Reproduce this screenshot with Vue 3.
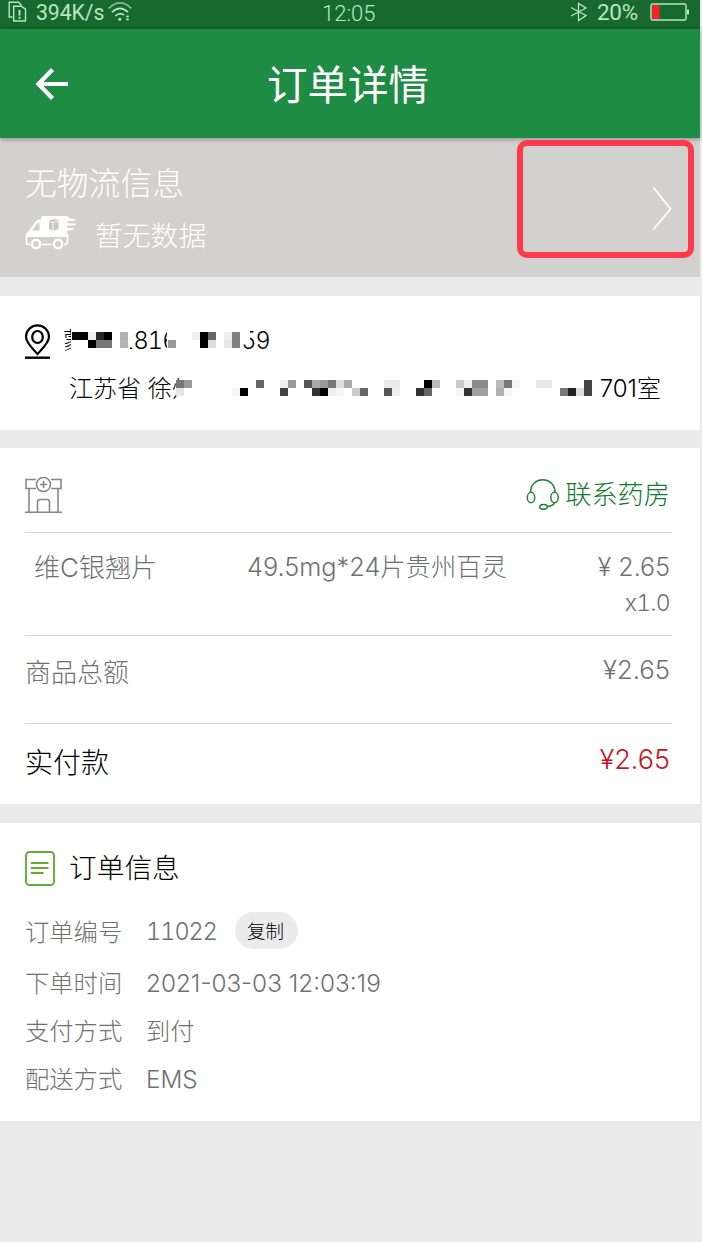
<script setup>
const cells = (rows, y0) =>
  rows.flatMap(([x, top, bottom]) => [
    { x, y: y0, fill: top },
    { x, y: y0 + 8, fill: bottom },
  ]).filter((c) => c.fill)

const phoneMosaic = cells([
  [72, '#0c0c0c', '#fff'], [80, '#000', '#fff'], [88, '#eee', '#000'], [96, '#262626', '#777'],
  [104, '#000', '#777'], [112, '#fff', '#fff'], [120, '#b2b2b2', '#b5b5b5'],
  [168, '#fff', '#999'], [176, '#fff', '#fdfdfd'], [192, '#eee', '#fff'], [200, '#000', '#000'],
  [208, '#666', '#ddd'], [224, '#eee', '#e8e8e8'], [232, '#808080', '#808080'],
], 36)

const addressMosaic = cells([
  [176, '#777', '#e5e5e5'], [184, '#999', '#fff'], [232, '', '#f6f6f6'], [240, '', '#000'],
  [256, '#666', ''], [280, '#eee', '#444'], [288, '#999', ''], [304, '#555', ''],
  [312, '#aaa', '#333'], [320, '#999', '#000'], [328, '#777', '#eee'], [336, '#ddd', '#f6f6f6'],
  [344, '#aaa', ''], [352, '', '#ccc'], [360, '', '#666'], [384, '#eaeaea', '#555'],
  [392, '#eaeaea', '#eee'], [416, '', '#333'], [424, '#000', '#666'], [432, '#bbb', ''],
  [456, '#ccc', '#f6f6f6'], [464, '#eee', '#333'], [472, '#8c8c8c', '#a0a0a0'],
  [480, '#8c8c8c', '#a0a0a0'], [496, '#bbb', '#b0b0b0'], [504, '#777', '#f6f6f6'],
  [512, '#f6f6f6', ''], [536, '#e8e8e8', ''], [544, '#e8e8e8', ''], [560, '', '#777'],
  [568, '', '#222'], [576, '', '#ddd'], [584, '#444', '#444'],
], 84)

const mosaic = [...phoneMosaic, ...addressMosaic]

const info = [
  { label: '订单编号', value: '11022', copy: true },
  { label: '下单时间', value: '2021-03-03 12:03:19' },
  { label: '支付方式', value: '到付' },
  { label: '配送方式', value: 'EMS' },
]
</script>

<template>
  <div class="page">
    <div class="status">
      <svg class="sim" width="20" height="22" viewBox="0 0 20 22" fill="none" stroke="#b9e6bd" stroke-width="1.4">
        <path d="M4.500 17H1.200V2.200H10.500l3 3M5.700 6.200h7.500l4.300 3v11.800H5.700z" />
        <path d="M11.500 10v5.500M11.500 16.800v2" stroke-width="2" />
      </svg>
      <span class="speed">394K/s</span>
      <svg class="wifi" width="24" height="20" viewBox="0 0 24 20" fill="none" stroke="#b9e6bd" stroke-width="1.7">
        <path d="M.8 6.3Q12-4.500 23.2 6.3" opacity=".65" /><path d="M4 10.2Q12 2.500 20 10.2M7.2 14Q12 9.500 16 13.2" />
        <circle cx="11.8" cy="17.2" r="1.5" fill="#b9e6bd" stroke="none" />
        <path d="M18.2 14.3h3.600M18.2 17.300h3.600" stroke-dasharray="2.6 1" />
      </svg>
      <span class="time">12:05</span>
      <svg class="bt" width="18" height="20" viewBox="0 0 18 20" fill="none" stroke="#b9e6bd" stroke-width="1.300">
        <path d="M1 5.500l15 8-7.500 5V1.500l7.500 4.500-15 8" />
      </svg>
      <span class="percent">20%</span>
      <svg class="battery" width="40" height="19" viewBox="0 0 40 19">
        <rect x="1" y="1" width="35" height="16" rx="1.500" fill="none" stroke="#b9e6bd" stroke-width="1.400" />
        <path d="M2 2h7.500v14H2z" fill="#f5222a" /><path d="M37 6.500h2v5h-2z" fill="#b9e6bd" />
      </svg>
    </div>

    <header class="header">
      <svg class="back" width="34" height="32" viewBox="0 0 34 32" fill="none" stroke="#fff" stroke-width="4.200">
        <path d="M17.500 1.500L3.500 16l14 14.500M4 16h29" />
      </svg>
      <h1>订单详情</h1>
    </header>

    <section class="logistics">
      <div class="log-title">无物流信息</div>
      <div class="log-row">
        <svg width="52" height="36" viewBox="0 0 52 36">
          <path d="M16 3q0-2 2-2h23q3 0 3.500 2.500l6 .8v1.200L42 6.500V8l9 .7v1.100L42 11v1.800l7 .7v1.200l-6.500 1L42 22H16z" fill="#fff" />
          <path d="M15 5.500q-2-.5-4 2L5.500 15l-4 4.500V28q0 1.500 1.500 1.500h2M17 29.500h9.500M38.500 29.500H40q2.500 0 2.500-3V19" fill="none" stroke="#fff" stroke-width="1.700" />
          <path d="M17 5h-2q-2 0-4 3L5.500 15.500 1 20v2h16zM14.500 7.500v8H7l4.500-6.500q1-1.500 3-1.500z" fill="#fff" fill-rule="evenodd" />
          <circle cx="11" cy="29" r="4.200" fill="none" stroke="#fff" stroke-width="2.500" />
          <circle cx="33" cy="29" r="4.200" fill="none" stroke="#fff" stroke-width="2.500" />
          <path d="M24 5.500l4.500-1.500 5 1v9l-5 2-4.500-2z" fill="#c9c8c6" />
          <path d="M24 6.500l4 1 5-1.500M28 7.500V16" fill="none" stroke="#fff" stroke-width=".9" />
        </svg>
        <span>暂无数据</span>
      </div>
      <svg class="chevron" width="20" height="46" viewBox="0 0 20 46" fill="none" stroke="#fff" stroke-width="1.700">
        <path d="M1.500 1.500L18.500 23 1.500 43.500" />
      </svg>
      <div class="highlight"></div>
    </section>

    <section class="address">
      <svg class="pin" width="27" height="36" viewBox="0 0 27 36" fill="none" stroke="#000" stroke-width="2.200">
        <path d="M13.500 30C9 25 2 19 2 12.800A11.500 11.500 0 0 1 25 12.800C25 19 18 25 13.500 30z" />
        <ellipse cx="13.500" cy="13" rx="5.300" ry="6" /><path d="M1 33.700h25" stroke-width="2.400" />
      </svg>
      <div class="contact">
        <span class="name">蒙</span><span class="digits">1816</span><span class="tail">59</span>
      </div>
      <div class="street"><span class="region">江苏省 徐州</span><span class="room">701室</span></div>
      <svg class="mosaic" width="700" height="134" viewBox="0 0 700 134" shape-rendering="crispEdges">
        <path d="M71 28h41v32H71zM112 28h18v32h-18zM167 28h69v26h-69zM236 28h14v18h-14zM180 76h56v32h-56zM592 76h9v32h-9z" fill="#fff" />
        <rect v-for="(c, i) in mosaic" :key="i" :x="c.x" :y="c.y" width="8" height="8" :fill="c.fill" />
      </svg>
    </section>

    <section class="goods">
      <div class="shop">
        <svg width="37" height="38" viewBox="0 0 37 38" fill="none" stroke="#888" stroke-width="1.600">
          <path d="M11 3.500H1v9h10M26 3.500h10v9H26M4 12.500V36M33 12.500V36M0 36.200h37M12.500 36V26q0-2.500 2.500-2.500h7q2.500 0 2.500 2.500v10" />
          <circle cx="18.500" cy="8.500" r="7" /><path d="M18.500 5v7M15 8.500h7" />
        </svg>
        <span class="call">
          <svg width="34" height="32" viewBox="0 0 34 32" fill="none" stroke="#208335" stroke-width="1.500">
            <path d="M4.500 13.500C4.500-3.500 29-3.500 29 13.500" />
            <ellipse cx="5" cy="18.500" rx="3.700" ry="5.200" /><ellipse cx="28.500" cy="18.500" rx="3.700" ry="5.200" />
            <path d="M28.500 24q-2 3-7 3.500" /><ellipse cx="17.500" cy="27.800" rx="3.800" ry="2.400" />
          </svg>
          <span>联系药房</span>
        </span>
      </div>
      <div class="item">
        <span class="item-name">维C银翘片</span>
        <span class="spec">49.5mg*24片贵州百灵</span>
        <span class="cost"><span>¥ 2.65</span><span class="qty">x1.0</span></span>
      </div>
      <div class="total"><span class="total-label">商品总额</span><span class="sum">¥2.65</span></div>
      <div class="paid"><span>实付款</span><span class="paid-sum">¥2.65</span></div>
    </section>

    <section class="order">
      <div class="order-head">
        <svg width="30" height="36" viewBox="0 0 30 36" fill="none" stroke="#5fae34" stroke-width="1.900">
          <rect x="1" y="2" width="28" height="33" rx="3.500" /><path d="M6 13h17.500M6 18h17.500M6 23h12.500" />
        </svg>
        <span>订单信息</span>
      </div>
      <div v-for="row in info" :key="row.label" class="row">
        <span class="label">{{ row.label }}</span>
        <span class="value">{{ row.value }}</span>
        <button v-if="row.copy" class="copy">复制</button>
      </div>
    </section>
  </div>
</template>

<style>
body { background: #ebebeb; }
</style>

<style scoped>
.page { width: 702px; height: 1242px; overflow: hidden; background: #ebebeb; font-family: Inter, "Noto Sans CJK SC", sans-serif; font-weight: 300; color: #000; }
.page * { box-sizing: border-box; }
.page svg { display: block; flex: none; }
.page span { white-space: nowrap; }
.status, .header, section { width: 700px; }
.status { height: 29px; background: #17692f; display: flex; color: #b9e6bd; font-family: Roboto, sans-serif; font-size: 22px; font-weight: 300; line-height: 27px; }
.sim { margin: 0 0 0 8px; }
.speed { width: 69px; margin-left: 8px; font-size: 21.300px; line-height: 26px; font-weight: 400; letter-spacing: -.1px; }
.wifi { margin: 2px 0 0 3px; }
.time { width: 56px; margin-left: 190px; }
.bt { margin: 2px 0 0 192px; }
.percent { width: 44px; margin-left: 9px; font-size: 22.500px; line-height: 25px; font-weight: 400; letter-spacing: -.3px; }
.battery { margin: 3px 0 0 9px; }
.header { height: 109px; background: #1e8c45; position: relative; z-index: 1; display: flex; align-items: center; box-shadow: 0 1px 5px rgba(0,0,0,.35); color: #fff; }
.back { margin: 0 0 0 35px; }
h1 { margin: 4px 0 0 198px; font-size: 40.500px; line-height: 60px; font-weight: 400; }
.logistics { height: 139px; background: #d2d1cf; position: relative; padding: 25px 25px 0; color: #fff; }
.log-title { font-size: 31.800px; line-height: 42px; }
.log-row { display: flex; align-items: center; gap: 18px; font-size: 27.800px; line-height: 42px; margin-top: 10px; }
.log-row svg { margin-top: -6px; }
.chevron { position: absolute; left: 652px; top: 48px; }
.highlight { position: absolute; left: 517px; top: 2px; width: 177px; height: 118px; border: 6px solid #fb3a4b; border-radius: 10px; z-index: 2; }
.address { margin-top: 19px; height: 134px; background: #fff; position: relative; padding-top: 27px; font-size: 24px; }
.pin { position: absolute; left: 24px; top: 28px; }
.mosaic { position: absolute; left: 0; top: 0; }
.contact { display: flex; height: 36px; line-height: 36px; padding-left: 63px; font-feature-settings: "tnum"; font-size: 23.500px; }
.digits { margin-left: 32px; letter-spacing: -.8px; }
.name { width: 24px; }
.contact .tail { width: 30px; margin-left: auto; margin-right: 430px; text-align: right; letter-spacing: -.8px; }
.street { display: flex; justify-content: space-between; margin-top: 12px; height: 36px; line-height: 36px; padding: 0 39px 0 69px; }
.goods { margin-top: 18px; height: 356px; background: #fff; padding: 0 28px 0 25px; color: #707070; }
.shop { height: 85px; border-bottom: 1px solid #d8d8d8; display: flex; justify-content: space-between; padding-top: 28px; }
.call { display: flex; gap: 5px; padding-right: 2px; font-size: 26.200px; line-height: 38px; color: #107a2d; }
.call svg { margin-top: 3px; }
.item { height: 103px; border-bottom: 1px solid #d8d8d8; display: flex; padding: 16px 2px 0 9px; font-size: 25px; line-height: 36px; }
.item-name { width: 213px; font-size: 26px; line-height: 37px; }
.spec { font-size: 25.300px; }
.cost { margin-left: auto; display: flex; flex-direction: column; text-align: right; }
.qty { font-size: 23px; font-feature-settings: "tnum"; letter-spacing: -.7px; }
.total { height: 88px; border-bottom: 1px solid #d8d8d8; display: flex; justify-content: space-between; padding: 16px 2px 0 0; font-size: 25.700px; line-height: 36px; }
.total-label { padding-top: 2px; font-size: 26px; line-height: 37px; }
.paid { display: flex; justify-content: space-between; padding: 20px 2px 0 0; font-size: 28px; line-height: 38px; color: #000; }
.paid-sum { color: #c9151e; font-size: 27px; line-height: 31px; }
.order { margin-top: 19px; height: 298px; background: #fff; padding: 27px 25px 0; }
.order-head { display: flex; gap: 14px; height: 36px; font-size: 27.700px; line-height: 37px; }
.row { display: flex; align-items: center; height: 48px; font-size: 24.300px; line-height: 36px; color: #707070; }
.row:nth-child(2) { height: 54px; margin-top: 19px; }
.row:nth-child(2) .value { width: 71px; font-feature-settings: "tnum"; font-size: 23.500px; letter-spacing: -1px; }
.label { width: 121px; }
.copy { border: 0; width: 63px; height: 37px; margin: -3px 0 0 18px; padding: 0 2px 0 0; border-radius: 19px; background: #ebebeb; color: #000; font: 300 18.500px/34px Inter, "Noto Sans CJK SC", sans-serif; }
</style>
